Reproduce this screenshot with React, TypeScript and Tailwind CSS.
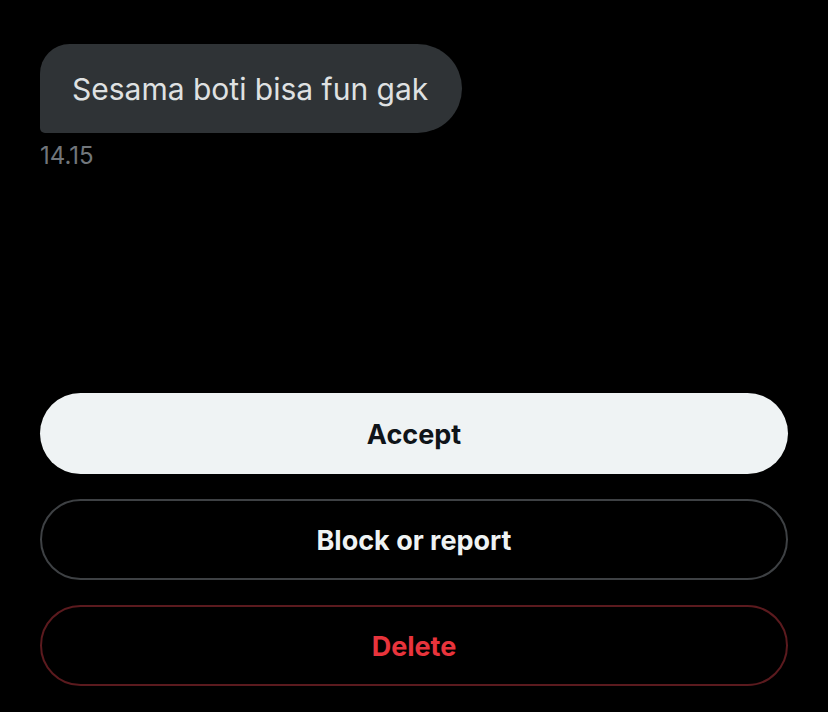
export default function App() {
  return (
    <div className="min-h-[712px] w-full bg-black px-10 font-['Inter',sans-serif] flex flex-col">
      <div className="pt-[44px]">
        <div className="inline-flex h-[89px] items-center rounded-tl-[30px] rounded-bl-[5px] rounded-r-[45px] bg-[#2f3336] pl-[32px] pr-[34px]">
          <span className="text-[30px] text-[#dfe1e2] leading-none">Sesama boti bisa fun gak</span>
        </div>
        <div className="mt-[11px] text-[24px] leading-none text-[#71767b]">14.15</div>
      </div>

      <div className="mt-[225px] flex flex-col gap-[25px]">
        <button className="h-[81px] w-full rounded-full bg-[#eff3f4] pt-[4px] text-[27px] font-bold text-[#0f1419]">
          Accept
        </button>
        <button className="h-[81px] w-full rounded-full border-2 border-[#3e4144] bg-black pt-[4px] text-[27px] font-bold text-[#eff3f4]">
          Block or report
        </button>
        <button className="h-[81px] w-full rounded-full border-2 border-[#5b1a1e] bg-black pt-[4px] text-[27px] font-bold text-[#e8343c]">
          Delete
        </button>
      </div>
    </div>
  );
}
